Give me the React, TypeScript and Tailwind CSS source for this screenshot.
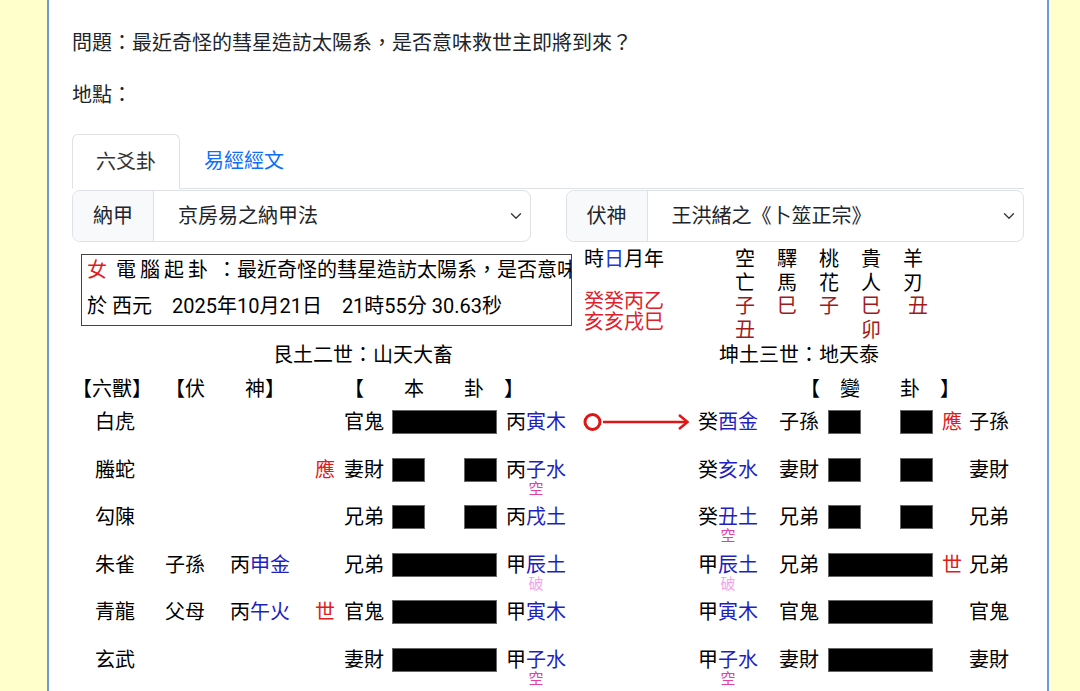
import React from "react";

type Row = {
  beast: string;
  fuRel?: string;
  fuStem?: string;
  fuBr?: string;
  fuEl?: string;
  mark?: string;
  rel: string;
  yang: boolean;
  stem: string;
  br: string;
  el: string;
  note?: string;
  moving?: boolean;
  cStem: string;
  cBr: string;
  cEl: string;
  cNote?: string;
  cRel: string;
  cYang: boolean;
  cMark?: string;
  cRel2: string;
};

const ROWS: Row[] = [
  { beast: "白虎", rel: "官鬼", yang: true, stem: "丙", br: "寅", el: "木", moving: true, cStem: "癸", cBr: "酉", cEl: "金", cRel: "子孫", cYang: false, cMark: "應", cRel2: "子孫" },
  { beast: "螣蛇", mark: "應", rel: "妻財", yang: false, stem: "丙", br: "子", el: "水", note: "空", cStem: "癸", cBr: "亥", cEl: "水", cRel: "妻財", cYang: false, cRel2: "妻財" },
  { beast: "勾陳", rel: "兄弟", yang: false, stem: "丙", br: "戌", el: "土", cStem: "癸", cBr: "丑", cEl: "土", cNote: "空", cRel: "兄弟", cYang: false, cRel2: "兄弟" },
  { beast: "朱雀", fuRel: "子孫", fuStem: "丙", fuBr: "申", fuEl: "金", rel: "兄弟", yang: true, stem: "甲", br: "辰", el: "土", note: "破", cStem: "甲", cBr: "辰", cEl: "土", cNote: "破", cRel: "兄弟", cYang: true, cMark: "世", cRel2: "兄弟" },
  { beast: "青龍", fuRel: "父母", fuStem: "丙", fuBr: "午", fuEl: "火", mark: "世", rel: "官鬼", yang: true, stem: "甲", br: "寅", el: "木", cStem: "甲", cBr: "寅", cEl: "木", cRel: "官鬼", cYang: true, cRel2: "官鬼" },
  { beast: "玄武", rel: "妻財", yang: true, stem: "甲", br: "子", el: "水", note: "空", cStem: "甲", cBr: "子", cEl: "水", cNote: "空", cRel: "妻財", cYang: true, cRel2: "妻財" },
];

const SHENSHA = [
  { t: ["空", "亡"], v: ["子", "丑"], shift: false },
  { t: ["驛", "馬"], v: ["巳"], shift: false },
  { t: ["桃", "花"], v: ["子"], shift: false },
  { t: ["貴", "人"], v: ["巳", "卯"], shift: false },
  { t: ["羊", "刃"], v: ["丑"], shift: true },
];

function Chevron() {
  return (
    <svg width="12" height="8" viewBox="0 0 12 8" fill="none">
      <path d="M1.5 1.8l4.5 4.4 4.5-4.4" stroke="#343a40" strokeWidth="1.4" strokeLinecap="round" strokeLinejoin="round" />
    </svg>
  );
}

function SelectGroup({ label, value }: { label: string; value: string }) {
  return (
    <div className="flex h-[52px] rounded-[8px] border border-[#dee2e6]">
      <div className="flex w-[81px] items-center justify-center rounded-l-[8px] border-r border-[#dee2e6] bg-[#f8f9fa]">{label}</div>
      <div className="flex flex-1 items-center justify-between pl-[24px] pr-[8px]">
        <span>{value}</span>
        <Chevron />
      </div>
    </div>
  );
}

function Bar({ yang }: { yang: boolean }) {
  if (yang) return <div className="h-[24px] w-[105px] border border-[#666] bg-black" />;
  return (
    <div className="flex h-[24px] w-[105px] justify-between">
      <div className="w-[33px] border border-[#666] bg-black" />
      <div className="w-[33px] border border-[#666] bg-black" />
    </div>
  );
}

function Note({ note }: { note?: string }) {
  if (!note) return null;
  const color = note === "破" ? "text-[#f2a4ec]" : "text-[#e040a8]";
  return (
    <span className={`absolute left-1/2 top-[24px] -translate-x-1/2 text-[15px] leading-[15px] ${color}`}>{note}</span>
  );
}

function GanZhi({ stem, br, el, note }: { stem: string; br: string; el: string; note?: string }) {
  return (
    <span className="whitespace-nowrap">
      {stem}
      <span className="relative text-[#1f1fbf]">
        {br}
        <Note note={note} />
      </span>
      <span className="text-[#1f1fbf]">{el}</span>
    </span>
  );
}

function Arrow() {
  return (
    <svg width="112" height="24" viewBox="0 0 112 24" fill="none">
      <circle cx="10.5" cy="12" r="7.5" stroke="#e01515" strokeWidth="3" />
      <line x1="21" y1="12" x2="105" y2="12" stroke="#e01515" strokeWidth="2.5" />
      <polyline points="97,5 105.5,12 97,19" stroke="#e01515" strokeWidth="2.5" strokeLinejoin="miter" fill="none" />
    </svg>
  );
}

export default function App() {
  return (
    <div className="min-h-screen bg-[#ffffcc] font-['Roboto','Noto_Sans_CJK_TC',sans-serif] text-[20px] text-[#212529]">
      <div className="ml-[47px] min-h-[691px] w-[1002px] border-x-2 border-[#6d98da] bg-white px-[23px]">
        <div className="pt-[31px] leading-[24px]">問題：最近奇怪的彗星造訪太陽系，是否意味救世主即將到來？</div>
        <div className="mt-[28px] leading-[24px]">地點：</div>

        {/* tabs */}
        <div className="mt-[27px] flex border-b border-[#dee2e6]">
          <div className="-mb-px flex h-[55px] items-center rounded-t-[6px] border border-[#dee2e6] border-b-white bg-white px-[23px] text-[#333]">六爻卦</div>
          <div className="flex h-[54px] items-center px-[24px] text-[#0d6efd]">易經經文</div>
        </div>

        <div className="mt-[1px] grid grid-cols-2 gap-[35px]">
          <SelectGroup label="納甲" value="京房易之納甲法" />
          <SelectGroup label="伏神" value="王洪緒之《卜筮正宗》" />
        </div>

        {/* info */}
        <div className="mt-[6px] flex text-black">
          <div className="ml-[9px] mt-[6px] h-[72px] w-[491px] overflow-hidden whitespace-nowrap border border-[#444] pl-[5px]">
            <div className="h-[30px] leading-[30px]">
              <span className="text-[#e01b1b]">女</span>
              <span className="ml-[9px] tracking-[4px]">電腦起卦</span>
              <span> ：最近奇怪的彗星造訪太陽系，是否意味救世主即將到來？</span>
            </div>
            <div className="mt-[6px] h-[30px] leading-[30px]">於 西元　2025年10月21日　21時55分 30.63秒</div>
          </div>
          <div className="ml-[12px] flex">
            <div className="w-[151px]">
              <div className="h-[23px] leading-[23px]">
                時<span className="text-[#1a3ad0]">日</span>月年
              </div>
              <div className="mt-[20px] leading-[21px] text-[#e0202a]">
                <div>癸癸丙乙</div>
                <div>亥亥戌巳</div>
              </div>
            </div>
            {SHENSHA.map((s) => (
              <div key={s.t.join("")} className="flex w-[42px] flex-col leading-[23.5px]">
                {s.t.map((c) => (
                  <span key={c}>{c}</span>
                ))}
                {s.v.map((c, i) => (
                  <span key={i} className={`text-[#a31818] ${s.shift ? "pl-[5px]" : ""}`}>{c}</span>
                ))}
              </div>
            ))}
          </div>
        </div>

        <div className="mt-[1px] flex h-[24px] leading-[24px] text-black">
          <span className="ml-[201px] w-[180px]">艮土二世：山天大畜</span>
          <span className="ml-[266px]">坤土三世：地天泰</span>
        </div>

        {/* table header */}
        <div className="mt-[12px] flex h-[20px] whitespace-nowrap leading-[20px] text-black">
          <span className="w-[93px]">【六獸】</span>
          <span className="w-[179px]">【伏　　神】</span>
          <span className="w-[456px]">【　　本　　卦　】</span>
          <span>【　變　　卦　】</span>
        </div>

        {/* rows */}
        <div className="mt-[11px] text-black">
          {ROWS.map((r) => (
            <div
              key={r.beast}
              className="grid h-[47.6px] grid-cols-[70px_65px_85px_29px_48px_114px_76px_116px_81px_49px_114px_27px_1fr] items-start pl-[23px] leading-[24px]"
            >
              <span>{r.beast}</span>
              <span>{r.fuRel}</span>
              <span>{r.fuStem && <GanZhi stem={r.fuStem} br={r.fuBr!} el={r.fuEl!} />}</span>
              <span className="text-[#e01b1b]">{r.mark}</span>
              <span>{r.rel}</span>
              <Bar yang={r.yang} />
              <GanZhi stem={r.stem} br={r.br} el={r.el} note={r.note} />
              <span className="flex">{r.moving && <Arrow />}</span>
              <GanZhi stem={r.cStem} br={r.cBr} el={r.cEl} note={r.cNote} />
              <span>{r.cRel}</span>
              <Bar yang={r.cYang} />
              <span className="text-[#e01b1b]">{r.cMark}</span>
              <span>{r.cRel2}</span>
            </div>
          ))}
        </div>
      </div>
    </div>
  );
}
